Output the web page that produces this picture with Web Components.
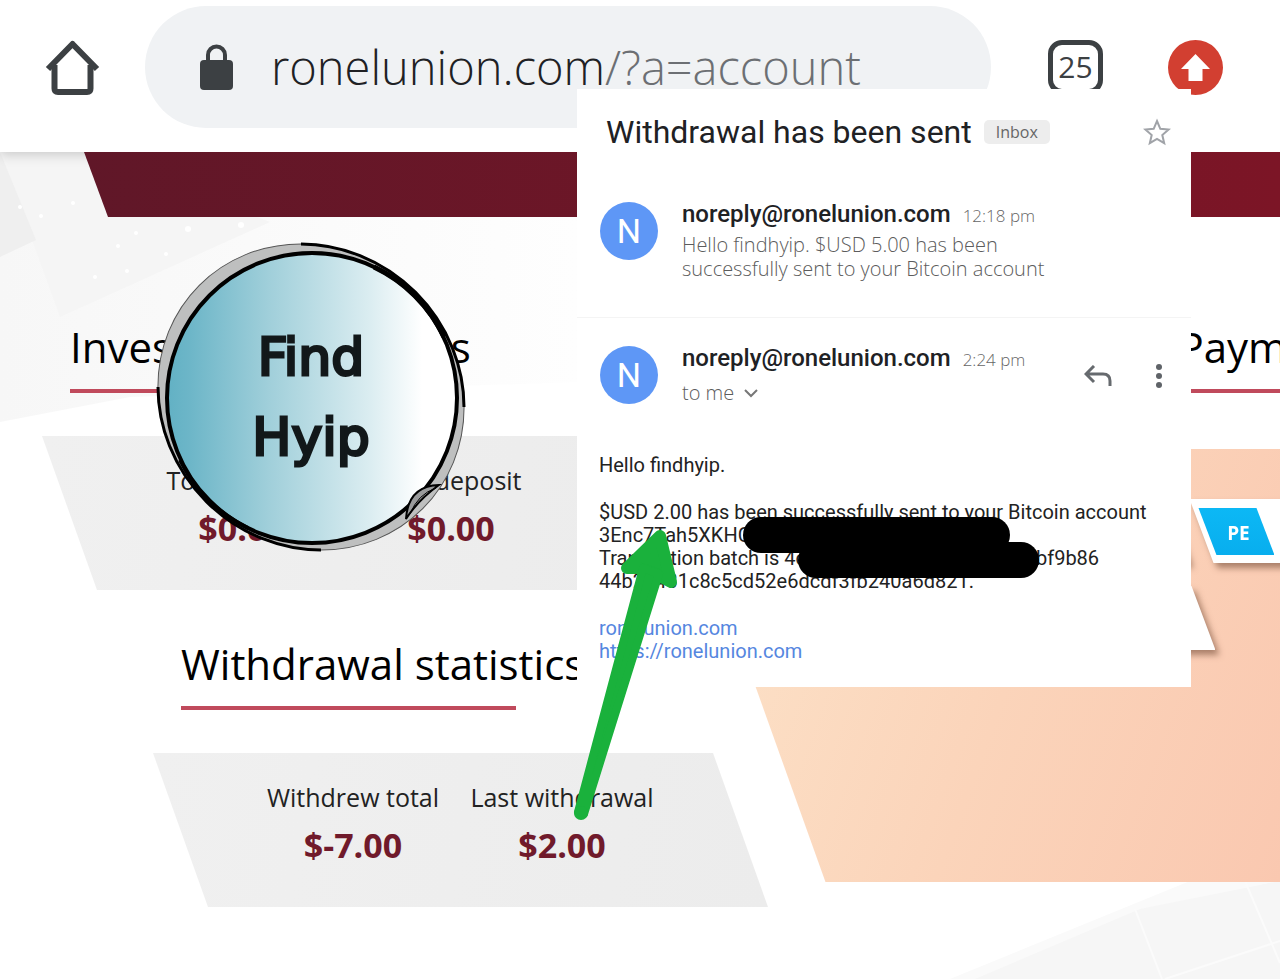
<!DOCTYPE html>
<html lang="en">
<head>
<meta charset="utf-8">
<meta name="viewport" content="width=device-width, initial-scale=1">
<title>Withdrawal has been sent</title>
<style>
    body {
        margin: 0;
        background: #fff;
        font-family: "Open Sans", "Noto Sans", sans-serif;
        color: #111;
    }
</style>
</head>
<body>
<proof-screen>
    <browser-toolbar slot="toolbar" host="ronelunion.com" path="/?a=account" tabs="25"></browser-toolbar>

    <account-page slot="page">
        <stat-section heading="Investment statistics">
            <stat-item label="Total deposit" value="$0.00"></stat-item>
            <stat-item label="Last deposit" value="$0.00"></stat-item>
        </stat-section>
        <stat-section heading="Withdrawal statistics" shifted>
            <stat-item label="Withdrew total" value="$-7.00"></stat-item>
            <stat-item label="Last withdrawal" value="$2.00"></stat-item>
        </stat-section>
        <payment-panel slot="side" heading="Payment"></payment-panel>
    </account-page>

    <round-logo slot="overlay"></round-logo>

    <mail-card slot="overlay" subject="Withdrawal has been sent" label="Inbox">
        <mail-row sender="noreply@ronelunion.com" time="12:18 pm">Hello findhyip. $USD 5.00 has been<br>successfully sent to your Bitcoin account</mail-row>
        <mail-row sender="noreply@ronelunion.com" time="2:24 pm" opened>to me</mail-row>
        <mail-body></mail-body>
    </mail-card>

    <pointer-arrow slot="overlay"></pointer-arrow>
</proof-screen>

<script>
class ProofScreen extends HTMLElement {
    constructor() {
        super();
        this.attachShadow({ mode: 'open' });
        this.shadowRoot.innerHTML = `
            <style>
                :host {
                    display: block;
                    position: relative;
                    overflow: hidden;
                    min-height: 100vh;
                }
            </style>
            <slot name="toolbar"></slot>
            <slot name="page"></slot>
            <slot name="overlay"></slot>
        `;
    }
}

class BrowserToolbar extends HTMLElement {
    connectedCallback() {
        this.attachShadow({ mode: 'open' });
        this.shadowRoot.innerHTML = `
            <style>
                :host {
                    display: flex;
                    align-items: center;
                    position: relative;
                    z-index: 1;
                    padding: 6px 57px 24px 45px;
                    background: #fff;
                    box-shadow: 0 2px 12px rgba(0, 0, 0, 0.2);
                }
                button {
                    display: block;
                    padding: 0;
                    border: 0;
                    background: none;
                    font: inherit;
                }
                svg { display: block; }
                .address {
                    flex: 1;
                    min-width: 0;
                    display: flex;
                    align-items: center;
                    gap: 38px;
                    box-sizing: border-box;
                    height: 122px;
                    margin: 0 57px 0 45px;
                    padding-left: 55px;
                    border-radius: 61px;
                    background: #f0f2f4;
                    overflow: hidden;
                }
                .url {
                    font-size: 47px;
                    line-height: 60px;
                    font-weight: 300;
                    color: #6c6f73;
                    white-space: nowrap;
                }
                .url span { color: #202124; }
                .tabs {
                    width: 55px;
                    height: 54px;
                    box-sizing: border-box;
                    margin-right: 65px;
                    border: 5px solid #3c4043;
                    border-radius: 14px;
                    font-size: 30px;
                    line-height: 44px;
                    font-weight: 400;
                    color: #3c4043;
                }
            </style>
            <button aria-label="Home">
                <svg width="55" height="58" viewBox="0 0 55 58" fill="none" stroke="#3c4043" stroke-width="6" stroke-linejoin="round">
                    <path d="M3 31 27.500 6 52 31"/>
                    <path d="M9.500 27V50.500Q9.500 54 13 54H42Q45.500 54 45.500 50.500V27"/>
                </svg>
            </button>
            <div class="address">
                <svg width="33" height="46" viewBox="0 0 33 46">
                    <rect y="16" width="33" height="30" rx="4" fill="#3c4043"/>
                    <path d="M8 18V11a8.500 8.500 0 0 1 17 0v7" fill="none" stroke="#3c4043" stroke-width="4"/>
                </svg>
                <div class="url"><span>${this.getAttribute('host')}</span>${this.getAttribute('path')}</div>
            </div>
            <button class="tabs" aria-label="Open tabs">${this.getAttribute('tabs')}</button>
            <button aria-label="Update">
                <svg width="55" height="55" viewBox="0 0 55 55">
                    <circle cx="27.500" cy="27.500" r="27.500" fill="#d23f31"/>
                    <path d="M27.500 14 42 29H34.500V41H20.500V29H13Z" fill="#fff"/>
                </svg>
            </button>
        `;
    }
}

class AccountPage extends HTMLElement {
    constructor() {
        super();
        this.attachShadow({ mode: 'open' });
        this.shadowRoot.innerHTML = `
            <style>
                :host {
                    display: block;
                    position: relative;
                    padding-bottom: 72px;
                }
                .texture {
                    position: absolute;
                    z-index: -1;
                }
                .texture.top {
                    top: 0;
                    left: 0;
                }
                .texture.bottom {
                    right: 0;
                    bottom: 0;
                }
                .banner {
                    position: relative;
                    z-index: 1;
                    height: 65px;
                    margin-left: 84px;
                    background: linear-gradient(90deg, #601728, #7c1526);
                    clip-path: polygon(0 0, 100% 0, 100% 100%, 24px 100%);
                }
                .columns {
                    display: grid;
                    grid-template-columns: minmax(0, 11fr) minmax(0, 10fr);
                    padding-top: 102px;
                }
                .stats {
                    display: flex;
                    flex-direction: column;
                    gap: 46px;
                }
            </style>
            <svg class="texture top" width="580" height="290" viewBox="0 0 580 290">
                <defs>
                    <linearGradient id="haze" x2="1" y2="0">
                        <stop offset="0" stop-color="#f7f7f7"/>
                        <stop offset="1" stop-color="#fefefe"/>
                    </linearGradient>
                </defs>
                <path d="M0 0H580V230L130 245 0 270Z" fill="url(#haze)"/>
                <path d="M0 0H90L270 70 60 165 0 0Z" fill="#f5f5f5"/>
                <path d="M0 0 36 88 0 105Z" fill="#efefef"/>
                <g fill="#fff">
                    <circle cx="20" cy="55" r="2"/><circle cx="41" cy="64" r="2"/>
                    <circle cx="73" cy="51" r="2"/><circle cx="136" cy="81" r="2"/>
                    <circle cx="188" cy="77" r="3"/><circle cx="241" cy="73" r="3"/>
                    <circle cx="118" cy="94" r="2"/><circle cx="166" cy="102" r="2"/>
                    <circle cx="95" cy="125" r="2"/><circle cx="127" cy="119" r="2"/>
                </g>
            </svg>
            <svg class="texture bottom" width="330" height="98" viewBox="0 0 330 98">
                <path d="M0 98 240 0H330V98Z" fill="#fafafa"/>
                <path d="M25 98 190 28 330 0V98Z" fill="#f6f6f6"/>
                <path d="M185 28 212 98M295 0 330 82M215 98 330 60" stroke="#fbfbfb" stroke-width="2" fill="none"/>
            </svg>
            <div class="banner"></div>
            <div class="columns">
                <div class="stats"><slot></slot></div>
                <slot name="side"></slot>
            </div>
        `;
    }
}

class StatSection extends HTMLElement {
    connectedCallback() {
        this.attachShadow({ mode: 'open' });
        this.shadowRoot.innerHTML = `
            <style>
                :host {
                    display: block;
                    margin-left: 42px;
                }
                :host([shifted]) { margin-left: 153px; }
                h2 {
                    margin: 0 0 0 28px;
                    font-size: 42px;
                    line-height: 56px;
                    font-weight: 400;
                    color: #000;
                    white-space: nowrap;
                }
                .rule {
                    width: 335px;
                    height: 4px;
                    margin: 14px 0 43px 28px;
                    background: #c04a5c;
                }
                .box {
                    display: grid;
                    grid-template-columns: 209px 209px;
                    justify-content: center;
                    box-sizing: border-box;
                    width: 615px;
                    padding: 28px 6px 42px 0;
                    background: linear-gradient(100deg, #f0f0f0, #ececec);
                    clip-path: polygon(0 0, 560px 0, 100% 100%, 55px 100%);
                }
            </style>
            <h2>${this.getAttribute('heading')}</h2>
            <div class="rule"></div>
            <div class="box"><slot></slot></div>
        `;
    }
}

class StatItem extends HTMLElement {
    connectedCallback() {
        this.attachShadow({ mode: 'open' });
        this.shadowRoot.innerHTML = `
            <style>
                :host {
                    display: flex;
                    flex-direction: column;
                    gap: 12px;
                    text-align: center;
                    white-space: nowrap;
                }
                .label {
                    font-size: 25px;
                    line-height: 32px;
                    color: #222;
                }
                .value {
                    font-size: 34px;
                    line-height: 40px;
                    font-weight: 700;
                    color: #701a2b;
                }
            </style>
            <div class="label">${this.getAttribute('label')}</div>
            <div class="value">${this.getAttribute('value')}</div>
        `;
    }
}

class PaymentPanel extends HTMLElement {
    connectedCallback() {
        this.attachShadow({ mode: 'open' });
        this.shadowRoot.innerHTML = `
            <style>
                :host {
                    display: block;
                    overflow: hidden;
                }
                h2 {
                    margin: 0 0 0 508px;
                    font-size: 42px;
                    line-height: 56px;
                    font-weight: 400;
                    color: #000;
                    white-space: nowrap;
                }
                .rule {
                    height: 4px;
                    margin: 14px 0 56px 508px;
                    background: #c04a5c;
                }
                .panel {
                    display: flex;
                    flex-direction: column;
                    gap: 23px;
                    box-sizing: border-box;
                    height: 433px;
                    padding-top: 50px;
                    background: linear-gradient(110deg, #fce0c6 15%, #fbd4ba 55%, #fac8b0);
                    clip-path: polygon(0 0, 100% 0, 100% 100%, 155px 100%);
                }
                .row {
                    display: flex;
                    margin-left: 409px;
                    filter: drop-shadow(4px 5px 3px rgba(90, 50, 30, 0.5));
                }
                .row + .row { margin-left: 435px; }
                .tile {
                    flex: none;
                    box-sizing: border-box;
                    width: 110px;
                    height: 64px;
                    padding: 9px;
                    background: #fff;
                    clip-path: polygon(0 0, 86px 0, 100% 100%, 24px 100%);
                }
                .tile.wide {
                    width: 180px;
                    clip-path: polygon(0 0, 156px 0, 100% 100%, 24px 100%);
                }
                .brand {
                    width: 76px;
                    height: 47px;
                    padding-left: 4px;
                    box-sizing: border-box;
                    font-size: 19px;
                    line-height: 50px;
                    font-weight: 700;
                    text-align: center;
                    color: #fff;
                    background: linear-gradient(#0cb8f5, #08aeee);
                    clip-path: polygon(0 0, 58px 0, 100% 100%, 18px 100%);
                }
            </style>
            <h2>${this.getAttribute('heading')}</h2>
            <div class="rule"></div>
            <div class="panel">
                <div class="row">
                    <div class="tile"></div>
                    <div class="tile wide"><div class="brand">PE</div></div>
                </div>
                <div class="row"><div class="tile"></div></div>
            </div>
        `;
    }
}

class RoundLogo extends HTMLElement {
    constructor() {
        super();
        this.attachShadow({ mode: 'open' });
        this.shadowRoot.innerHTML = `
            <style>
                :host {
                    position: absolute;
                    z-index: 2;
                    top: 242px;
                    left: 156px;
                    width: 310px;
                    height: 310px;
                    display: grid;
                    place-items: center;
                }
                svg, .name { grid-area: 1 / 1; }
                .name {
                    font-family: "DejaVu Sans", sans-serif;
                    font-size: 52px;
                    line-height: 80px;
                    font-weight: 400;
                    text-align: center;
                    color: #12181a;
                    -webkit-text-stroke: 3px #12181a;
                }
            </style>
            <svg width="310" height="310" viewBox="0 0 310 310" fill="none" stroke="#000">
                <defs>
                    <linearGradient id="lens">
                        <stop offset="0" stop-color="#62b1c4"/>
                        <stop offset="0.080" stop-color="#6db6c8"/>
                        <stop offset="0.350" stop-color="#a0cfda"/>
                        <stop offset="0.700" stop-color="#dbedf1"/>
                        <stop offset="0.880" stop-color="#fff"/>
                    </linearGradient>
                </defs>
                <!-- tilted rim, heavier where it meets the lens -->
                <ellipse cx="155" cy="155" rx="158" ry="148" transform="rotate(45 155 155)" fill="#bebfbf" stroke="#555" stroke-width="1"/>
                <circle cx="156" cy="156" r="145" fill="url(#lens)" stroke-width="4"/>
                <path d="M145 2A158 148 45 0 1 308 165" stroke-width="3"/>
                <path d="M165 308A158 148 45 0 1 2 145" stroke-width="3"/>
                <path d="M218 25A147 147 0 0 1 288 95" stroke-width="5"/>
                <path d="M92 286A147 147 0 0 1 24 218" stroke-width="4"/>
                <path d="M250 277Q252 244 283 243Q262 258 250 277Z" fill="#9a9b9c" stroke-width="2"/>
                <path d="M254 272Q262 252 280 246" stroke-width="1"/>
            </svg>
            <div class="name">Find<br>Hyip</div>
        `;
    }
}

class MailCard extends HTMLElement {
    connectedCallback() {
        this.attachShadow({ mode: 'open' });
        this.shadowRoot.innerHTML = `
            <style>
                :host {
                    position: absolute;
                    z-index: 3;
                    top: 89px;
                    left: 577px;
                    right: 89px;
                    background: #fff;
                }
                header {
                    display: flex;
                    align-items: center;
                    gap: 12px;
                    height: 85px;
                    padding: 0 20px 0 29px;
                }
                h1 {
                    margin: 0;
                    font-family: Roboto, sans-serif;
                    font-size: 32px;
                    line-height: 40px;
                    font-weight: 400;
                    color: #202124;
                    white-space: nowrap;
                }
                .label {
                    padding: 0 12px;
                    border-radius: 5px;
                    font-size: 16px;
                    line-height: 24px;
                    color: #666;
                    background: #ededed;
                }
                button {
                    margin-left: auto;
                    padding: 0;
                    border: 0;
                    background: none;
                }
                svg { display: block; }
            </style>
            <header>
                <h1>${this.getAttribute('subject')}</h1>
                <span class="label">${this.getAttribute('label')}</span>
                <button aria-label="Star">
                    <svg width="28" height="28" viewBox="0 0 28 28" fill="none" stroke="#a0a3a8" stroke-width="2">
                        <path d="M14 3 17.300 10.800 25.600 11.500 19.300 17 21.200 25.200 14 20.900 6.800 25.200 8.700 17 2.400 11.500 10.700 10.800Z"/>
                    </svg>
                </button>
            </header>
            <slot></slot>
        `;
    }
}

class MailRow extends HTMLElement {
    connectedCallback() {
        this.attachShadow({ mode: 'open' });
        const opened = this.hasAttribute('opened');
        this.shadowRoot.innerHTML = `
            <style>
                :host {
                    display: flex;
                    align-items: flex-start;
                    gap: 24px;
                    padding: 28px 27px 36px 23px;
                    border-bottom: 1px solid #f4f4f4;
                }
                :host([opened]) {
                    padding-bottom: 0;
                    border-bottom: 0;
                }
                .avatar {
                    flex: none;
                    width: 58px;
                    height: 58px;
                    border-radius: 50%;
                    font-family: Roboto, sans-serif;
                    font-size: 34px;
                    line-height: 58px;
                    text-align: center;
                    color: #fff;
                    background: #5e97f6;
                }
                .text { flex: 1; }
                .from {
                    display: flex;
                    align-items: baseline;
                    gap: 12px;
                    line-height: 24px;
                    white-space: nowrap;
                }
                .sender {
                    font-family: Roboto, sans-serif;
                    font-size: 24px;
                    font-weight: 500;
                    color: #202124;
                }
                .time {
                    font-size: 17px;
                    font-weight: 300;
                    color: #666;
                }
                .snippet {
                    display: flex;
                    align-items: center;
                    gap: 10px;
                    margin-top: 5px;
                    font-size: 20px;
                    line-height: 24px;
                    font-weight: 300;
                    color: #5c5c5c;
                    white-space: nowrap;
                }
                :host([opened]) .snippet { margin-top: 9px; }
                .actions {
                    display: flex;
                    align-self: center;
                    gap: 42px;
                }
                button {
                    padding: 0;
                    border: 0;
                    background: none;
                }
                svg { display: block; }
            </style>
            <div class="avatar">N</div>
            <div class="text">
                <div class="from">
                    <span class="sender">${this.getAttribute('sender')}</span>
                    <span class="time">${this.getAttribute('time')}</span>
                </div>
                <div class="snippet">
                    <span><slot></slot></span>
                    ${opened ? `
                    <svg width="14" height="10" viewBox="0 0 14 10" fill="none" stroke="#777" stroke-width="2"><path d="M1 2 7 8 13 2"/></svg>
                    ` : ''}
                </div>
            </div>
            ${opened ? `
            <div class="actions">
                <button aria-label="Reply">
                    <svg width="28" height="22" viewBox="0 0 28 22" fill="none" stroke="#666a6e" stroke-width="3"><path d="M10 1 2 9 10 17M2 9H19Q26 9 26 16V21"/></svg>
                </button>
                <button aria-label="More">
                    <svg width="10" height="24" viewBox="0 0 10 24" fill="#5f6368"><circle cx="5" cy="3" r="3"/><circle cx="5" cy="12" r="3"/><circle cx="5" cy="21" r="3"/></svg>
                </button>
            </div>
            ` : ''}
        `;
    }
}

class MailBody extends HTMLElement {
    constructor() {
        super();
        this.attachShadow({ mode: 'open' });
        this.shadowRoot.innerHTML = `
            <style>
                :host {
                    display: block;
                    position: relative;
                    padding: 49px 22px 24px;
                    font-family: Roboto, sans-serif;
                    font-size: 20px;
                    line-height: 23px;
                    color: #222;
                    white-space: nowrap;
                }
                p { margin: 0 0 24px; }
                p:last-of-type { margin-bottom: 0; }
                a {
                    color: #5586e0;
                    text-decoration: none;
                }
                .mark {
                    position: absolute;
                    height: 36px;
                    border-radius: 18px;
                    background: #000;
                }
                .mark.first {
                    top: 112px;
                    left: 166px;
                    width: 267px;
                }
                .mark.second {
                    top: 137px;
                    left: 221px;
                    width: 241px;
                }
                .tail { margin-left: 230px; }
            </style>
            <p>Hello findhyip.</p>
            <p>$USD 2.00 has been successfully sent to your Bitcoin account<br>
            3Enc7Tah5XKHC<br>
            Transaction batch is 4c<span class="tail">bf9b86</span><br>
            44b23431c8c5cd52e6dcdf3fb240a6d821.</p>
            <p><a href="#">ronelunion.com</a><br>
            <a href="#">https://ronelunion.com</a></p>
            <div class="mark first"></div>
            <div class="mark second"></div>
        `;
    }
}

class PointerArrow extends HTMLElement {
    constructor() {
        super();
        this.attachShadow({ mode: 'open' });
        this.shadowRoot.innerHTML = `
            <style>
                :host {
                    position: absolute;
                    z-index: 4;
                    top: 526px;
                    left: 570px;
                    pointer-events: none;
                }
                svg { display: block; }
            </style>
            <svg width="112" height="298" viewBox="0 0 112 298" fill="#1ab13c" stroke="#1ab13c" stroke-linejoin="round">
                <path d="M90 10 57 42 68 42 84 47 101 56Z" stroke-width="12"/>
                <path d="M73 42 8 286 14 288 89 48Z" stroke-width="8"/>
                <circle cx="11" cy="287" r="7" stroke="none"/>
            </svg>
        `;
    }
}

customElements.define('proof-screen', ProofScreen);
customElements.define('browser-toolbar', BrowserToolbar);
customElements.define('account-page', AccountPage);
customElements.define('stat-section', StatSection);
customElements.define('stat-item', StatItem);
customElements.define('payment-panel', PaymentPanel);
customElements.define('round-logo', RoundLogo);
customElements.define('mail-card', MailCard);
customElements.define('mail-row', MailRow);
customElements.define('mail-body', MailBody);
customElements.define('pointer-arrow', PointerArrow);
</script>
</body>
</html>
